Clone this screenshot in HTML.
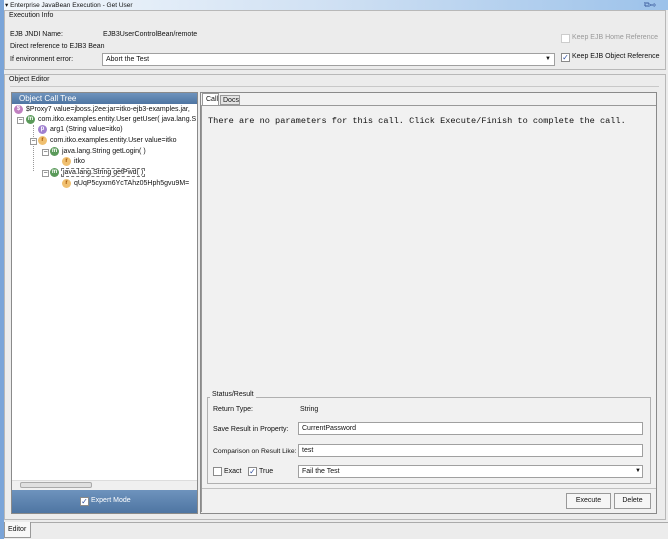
<!DOCTYPE html><html><head><style>
*{margin:0;padding:0;box-sizing:border-box}
body{width:668px;height:539px;position:relative;overflow:hidden;background:#ececec;font-family:"Liberation Sans",sans-serif;font-size:7px;color:#111}
.a{position:absolute;white-space:nowrap}
.in{position:absolute;background:#fff;border:1px solid #a0a0a0}
.cb{position:absolute;width:9px;height:9px;border:1px solid #8a8a8a;background:#fff;font-size:8px;line-height:7px;text-align:center;color:#3050a0}
.ic{position:absolute;width:9px;height:9px;border-radius:50%;font-size:6px;line-height:9px;text-align:center;font-weight:bold}
.ln{position:absolute;border-left:1px dotted #999}
.pm{position:absolute;width:7px;height:7px;border:1px solid #999;background:#fff;font-size:7px;line-height:5px;text-align:center;color:#333}
</style></head><body>
<div class="a" style="left:0;top:0;width:4px;height:539px;background:#7aa4d8"></div>
<div class="a" style="left:4px;top:0;width:664px;height:10px;background:linear-gradient(to right,#f4f8fc,#cfe0f3 50%,#9cc2ea)"></div>
<div class="a" style="left:5px;top:1px;font-size:6.5px">▾ Enterprise JavaBean Execution - Get User</div>
<div class="a" style="left:644px;top:0;font-size:8px;color:#4060a0">⧉⇨</div>
<div class="a" style="left:4px;top:10px;width:662px;height:60px;border:1px solid #b8b8b8"></div>
<div class="a" style="left:9px;top:12px">Execution Info</div>
<div class="a" style="left:10px;top:31px">EJB JNDI Name:</div>
<div class="a" style="left:103px;top:31px">EJB3UserControlBean/remote</div>
<div class="a" style="left:10px;top:43px">Direct reference to EJB3 Bean</div>
<div class="a" style="left:10px;top:56px">If environment error:</div>
<div class="in" style="left:102px;top:53px;width:453px;height:13px"></div>
<div class="a" style="left:106px;top:56px">Abort the Test</div>
<div class="a" style="left:545px;top:56px;font-size:6px">▼</div>
<div class="cb" style="left:561px;top:34px;border-color:#ccc"></div>
<div class="a" style="left:572px;top:34px;color:#999">Keep EJB Home Reference</div>
<div class="cb" style="left:561px;top:53px">✓</div>
<div class="a" style="left:572px;top:53px">Keep EJB Object Reference</div>
<div class="a" style="left:4px;top:74px;width:662px;height:446px;border:1px solid #b8b8b8"></div>
<div class="a" style="left:9px;top:76px">Object Editor</div>
<div class="a" style="left:10px;top:86px;width:649px;height:1px;background:#c8c8c8"></div>
<div class="a" style="left:11px;top:92px;width:187px;height:422px;border:1px solid #8a8a8a;background:#fff;overflow:hidden">
<div class="a" style="left:0;top:0;width:185px;height:11px;background:linear-gradient(#6e93bd,#4e75a2);color:#fff;padding-left:7px;font-size:8px;line-height:11px">Object Call Tree</div>
<div class="ic" style="left:2px;top:12px;background:#c080c0;color:#fff">$</div>
<div class="a" style="left:14px;top:13px">$Proxy7 value=jboss.j2ee:jar=itko-ejb3-examples.jar,</div>
<div class="pm" style="left:5px;top:24px">−</div><div class="ic" style="left:14px;top:22px;background:#5a9a5a;color:#fff">m</div>
<div class="a" style="left:26px;top:23px">com.itko.examples.entity.User getUser( java.lang.S</div>
<div class="ln" style="left:21px;top:32px;height:46px"></div>
<div class="ic" style="left:26px;top:32px;background:#a080d0;color:#fff">p</div><div class="a" style="left:38px;top:33px">arg1 (String value=itko)</div>
<div class="pm" style="left:18px;top:45px">−</div><div class="ic" style="left:26px;top:43px;background:#f0c070;color:#a05000">r</div>
<div class="a" style="left:38px;top:44px">com.itko.examples.entity.User value=itko</div>
<div class="pm" style="left:30px;top:56px">−</div><div class="ic" style="left:38px;top:54px;background:#5a9a5a;color:#fff">m</div>
<div class="a" style="left:50px;top:55px">java.lang.String getLogin( )</div>
<div class="ic" style="left:50px;top:64px;background:#f0c070;color:#a05000">r</div><div class="a" style="left:62px;top:65px">itko</div>
<div class="pm" style="left:30px;top:77px">−</div><div class="ic" style="left:38px;top:75px;background:#5a9a5a;color:#fff">m</div>
<div class="a" style="left:49px;top:75px;border:1px dashed #777;padding:0 1px">java.lang.String getPwd( )</div>
<div class="ic" style="left:50px;top:86px;background:#f0c070;color:#a05000">r</div><div class="a" style="left:62px;top:87px">qUqP5cyxm6YcTAhz05Hph5gvu9M=</div>
</div>
<div class="a" style="left:12px;top:480px;width:185px;height:10px;background:#f0f0f0;border-top:1px solid #ddd"></div>
<div class="a" style="left:20px;top:482px;width:72px;height:6px;background:#e0e0e0;border:1px solid #aaa;border-radius:2px"></div>
<div class="a" style="left:12px;top:490px;width:185px;height:23px;background:linear-gradient(#6e93bd,#4e75a2)"></div>
<div class="cb" style="left:80px;top:497px">✓</div>
<div class="a" style="left:91px;top:497px;color:#fff">Expert Mode</div>
<div class="a" style="left:200px;top:92px;width:457px;height:422px;border:1px solid #8a8a8a;background:#f1f1f1"></div>
<div class="a" style="left:202px;top:93px;width:17px;height:12px;background:#fff;border:1px solid #999;border-bottom:none;padding-left:3px;line-height:11px">Call</div>
<div class="a" style="left:220px;top:95px;width:20px;height:10px;background:#e4e4e4;border:1px solid #999;padding-left:2px;line-height:9px">Docs</div>
<div class="a" style="left:201px;top:105px;width:455px;height:1px;background:#999"></div>
<div class="a" style="left:201px;top:106px;width:1px;height:406px;background:#999"></div>
<div class="a" style="left:208px;top:116px;font-family:'Liberation Mono',monospace;font-size:8.6px">There are no parameters for this call.  Click Execute/Finish to complete the call.</div>
<div class="a" style="left:207px;top:397px;width:444px;height:87px;border:1px solid #b0b0b0"></div>
<div class="a" style="left:210px;top:391px;background:#f1f1f1;padding:0 2px">Status/Result</div>
<div class="a" style="left:213px;top:406px">Return Type:</div><div class="a" style="left:300px;top:406px">String</div>
<div class="a" style="left:213px;top:426px">Save Result in Property:</div>
<div class="in" style="left:298px;top:422px;width:345px;height:13px"></div><div class="a" style="left:302px;top:425px">CurrentPassword</div>
<div class="a" style="left:213px;top:448px;font-size:6.8px">Comparison on Result Like:</div>
<div class="in" style="left:298px;top:444px;width:345px;height:13px"></div><div class="a" style="left:302px;top:447px">test</div>
<div class="cb" style="left:213px;top:467px"></div><div class="a" style="left:224px;top:468px">Exact</div>
<div class="cb" style="left:248px;top:467px">✓</div><div class="a" style="left:259px;top:468px">True</div>
<div class="in" style="left:298px;top:465px;width:345px;height:13px"></div><div class="a" style="left:302px;top:468px">Fail the Test</div>
<div class="a" style="left:635px;top:468px;font-size:6px">▼</div>
<div class="a" style="left:202px;top:488px;width:454px;height:1px;background:#c0c0c0"></div>
<div class="a" style="left:566px;top:493px;width:45px;height:16px;border:1px solid #999;background:#f6f6f6;text-align:center;line-height:14px">Execute</div>
<div class="a" style="left:614px;top:493px;width:37px;height:16px;border:1px solid #999;background:#f6f6f6;text-align:center;line-height:14px">Delete</div>
<div class="a" style="left:4px;top:522px;width:664px;height:1px;background:#aaa"></div>
<div class="a" style="left:4px;top:522px;width:27px;height:16px;background:#f8f8f8;border:1px solid #999;border-top:none;padding:4px 0 0 3px">Editor</div>
</body></html>
